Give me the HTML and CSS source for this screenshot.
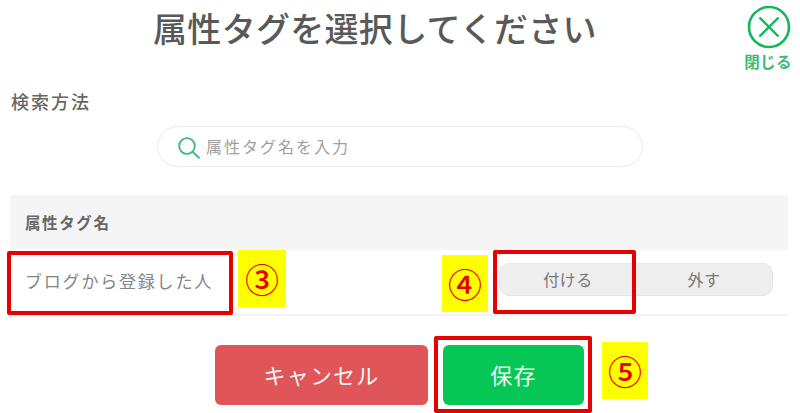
FILE: index.html
```html
<!DOCTYPE html>
<html lang="ja">
<head>
<meta charset="utf-8">
<title>属性タグを選択してください</title>
<link rel="stylesheet" href="styles.css">
</head>
<body>
<div class="page">
  <header class="header">
    <h1 class="title">属性タグを選択してください</h1>
    <div class="close">
      <svg class="close-icon" viewBox="0 0 44 44" width="44" height="44" aria-hidden="true">
        <circle cx="22" cy="22" r="20" fill="none" stroke="#12b75a" stroke-width="2.6"/>
        <path d="M12.5 12.5 L31.5 31.5 M31.5 12.5 L12.5 31.5" fill="none" stroke="#12b75a" stroke-width="2.4"/>
      </svg>
      <span class="close-label">閉じる</span>
    </div>
  </header>
  <div class="section-label">検索方法</div>
  <div class="search">
    <svg class="search-icon" viewBox="0 0 24 24" width="24" height="24" aria-hidden="true">
      <circle cx="10" cy="10" r="7.8" fill="none" stroke="#38b873" stroke-width="1.8"/>
      <path d="M15.6 15.6 L22.6 22.4" fill="none" stroke="#38b873" stroke-width="1.8"/>
    </svg>
    <span class="placeholder">属性タグ名を入力</span>
  </div>
  <div class="table-head">属性タグ名</div>
  <div class="table-row">
    <span class="row-name">ブログから登録した人</span>
    <div class="toggle">
      <span class="toggle-item">付ける</span>
      <span class="toggle-item">外す</span>
    </div>
  </div>
  <div class="actions">
    <button class="btn btn-cancel">キャンセル</button>
    <button class="btn btn-save">保存</button>
  </div>
</div>

<div class="mark mark-3">③</div>
<div class="mark mark-4">④</div>
<div class="mark mark-5">⑤</div>
<div class="frame frame-3"></div>
<div class="frame frame-4"></div>
<div class="frame frame-5"></div>
</body>
</html>
```

FILE: styles.css
```css
* { box-sizing: border-box; }
html, body {
  margin: 0;
  height: 413px;
  overflow: hidden;
  background: #fff;
}
body {
  position: relative;
  font-family: "Noto Sans CJK JP", "Noto Sans", sans-serif;
  color: #555;
}
.page {
  display: flex;
  flex-direction: column;
  padding: 0 12px 0 10px;
}
.header {
  display: flex;
  align-items: flex-start;
  gap: 4px;
  height: 88px;
  margin-right: -4px;
}
.title {
  flex: 1;
  margin: 5px 0 0;
  font-size: 34px;
  line-height: 46px;
  font-weight: 500;
  letter-spacing: 0.3px;
  text-align: center;
  color: #595959;
}
.close {
  width: 48px;
  padding-top: 5px;
  display: flex;
  flex-direction: column;
  align-items: center;
}
.close-icon { display: block; margin-left: 1px; }
.close-label {
  margin-top: 1px;
  font-size: 15.5px;
  line-height: 22px;
  font-weight: 700;
  color: #3dba78;
  white-space: nowrap;
  letter-spacing: 0.3px;
}
.section-label {
  height: 26px;
  font-size: 18px;
  line-height: 26px;
  font-weight: 500;
  letter-spacing: 2px;
  color: #666;
  margin-left: 1px;
}
.search {
  display: flex;
  align-items: center;
  gap: 5px;
  align-self: flex-start;
  width: 486px;
  height: 41px;
  margin: 12px 0 0 147px;
  padding: 0 0 0 19px;
  background: #fff;
  border: 1px solid #e9e9e9;
  border-radius: 21px;
}
.search-icon { flex: none; margin-top: 3px; }
.placeholder {
  font-size: 16px;
  line-height: 24px;
  letter-spacing: 2px;
  color: #a0a0a0;
  margin-bottom: 2px;
}
.table-head {
  margin-top: 28px;
  height: 55px;
  padding: 0 0 1px 15px;
  display: flex;
  align-items: center;
  background: #f5f5f5;
  font-size: 15.5px;
  font-weight: 700;
  letter-spacing: 1.6px;
  color: #666;
}
.table-row {
  height: 66px;
  display: flex;
  align-items: center;
  justify-content: space-between;
  padding: 0 15px 4px 15px;
  border-bottom: 2px solid #f3f3f3;
}
.row-name {
  font-size: 17px;
  letter-spacing: 1.8px;
  color: #858585;
}
.toggle {
  display: flex;
  width: 274px;
  height: 33px;
  margin-bottom: 2px;
  background: #eeeeee;
  border: 1px solid #e6e6e6;
  border-radius: 10px;
}
.toggle-item {
  flex: 1;
  display: flex;
  align-items: center;
  justify-content: center;
  font-size: 16px;
  letter-spacing: 0.5px;
  color: #777;
}
.actions {
  display: flex;
  justify-content: flex-start;
  gap: 15px;
  margin: 29px 0 0 205px;
}
.btn {
  height: 60px;
  border: 0;
  border-radius: 6px;
  color: #f4f4f4;
  font-family: inherit;
  font-size: 22px;
  font-weight: 400;
  letter-spacing: 1.2px;
  padding: 0 0 2px 0;
}
.btn-cancel { width: 213px; background: #e05558; }
.btn-save { width: 141px; background: #06c755; }

/* Annotations pasted over the screenshot */
.mark {
  position: absolute;
  display: flex;
  align-items: center;
  justify-content: center;
  background: #ffff00;
  color: #e60000;
  font-family: "Noto Sans CJK JP", sans-serif;
  font-size: 34px;
  font-weight: 500;
  line-height: 1;
}
.mark-3 { left: 238px; top: 250px; width: 48px; height: 57px; }
.mark-4 { left: 442px; top: 255px; width: 46px; height: 57px; }
.mark-5 { left: 602px; top: 342px; width: 46px; height: 57px; }
.frame {
  position: absolute;
  border: 4px solid #e60000;
  border-radius: 2px;
}
.frame-3 { left: 7px; top: 251px; width: 226px; height: 64px; }
.frame-4 { left: 493px; top: 250px; width: 143px; height: 64px; }
.frame-5 { left: 434px; top: 336px; width: 158px; height: 77px; }
```
